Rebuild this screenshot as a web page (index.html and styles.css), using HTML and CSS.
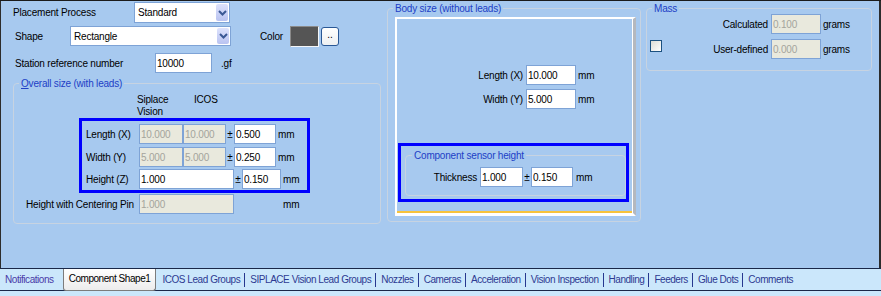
FILE: index.html
```html
<!DOCTYPE html>
<html lang="en">
<head>
    <meta charset="UTF-8">
    <title>Component Shape</title>
    <link rel="stylesheet" href="styles.css">
</head>
<body>

<div class="window">
    <div class="main">

        <!-- left column: process, shape, overall size -->
        <div class="col-left">
            <div class="row r1">
                <span class="lbl" style="width:121px">Placement Process</span>
                <div class="select w96">
                    <span class="sel-text">Standard</span>
                    <span class="sel-btn"><svg width="9" height="6" viewBox="0 0 9 6"><path d="M1 1 L4.5 4.5 L8 1" fill="none" stroke="#3a5894" stroke-width="2"/></svg></span>
                </div>
            </div>

            <div class="row r2">
                <span class="lbl" style="width:55px">Shape</span>
                <div class="select w161">
                    <span class="sel-text">Rectangle</span>
                    <span class="sel-btn"><svg width="9" height="6" viewBox="0 0 9 6"><path d="M1 1 L4.5 4.5 L8 1" fill="none" stroke="#3a5894" stroke-width="2"/></svg></span>
                </div>
                <span class="lbl color-lbl">Color</span>
                <span class="swatch"></span>
                <button class="dots" type="button">..</button>
            </div>

            <div class="row r3">
                <span class="lbl" style="width:140px">Station reference number</span>
                <input class="field" style="width:57px" type="text" value="10000">
                <span class="unit gf">.gf</span>
            </div>

            <fieldset class="group overall">
                <legend><u>O</u>verall size (with leads)</legend>
                <div class="head">
                    <span class="head-sv">Siplace<br>Vision</span>
                    <span>ICOS</span>
                </div>
                <div class="hbox">
                    <div class="row">
                        <span class="lbl dim-lbl">Length (X)</span>
                        <input class="field off" style="width:44px" type="text" value="10.000" disabled>
                        <input class="field off gap7" style="width:43px" type="text" value="10.000" disabled>
                        <span class="pm">±</span>
                        <input class="field" style="width:42px" type="text" value="0.500">
                        <span class="unit">mm</span>
                    </div>
                    <div class="row mt3">
                        <span class="lbl dim-lbl">Width (Y)</span>
                        <input class="field off" style="width:44px" type="text" value="5.000" disabled>
                        <input class="field off gap7" style="width:43px" type="text" value="5.000" disabled>
                        <span class="pm">±</span>
                        <input class="field" style="width:42px" type="text" value="0.250">
                        <span class="unit">mm</span>
                    </div>
                    <div class="row mt2">
                        <span class="lbl dim-lbl">Height (Z)</span>
                        <input class="field" style="width:95px" type="text" value="1.000">
                        <span class="pm">±</span>
                        <input class="field" style="width:39px" type="text" value="0.150">
                        <span class="unit">mm</span>
                    </div>
                </div>
                <div class="row pinrow">
                    <span class="lbl" style="width:113px">Height with Centering Pin</span>
                    <input class="field off" style="width:95px" type="text" value="1.000" disabled>
                    <span class="unit pin-unit">mm</span>
                </div>
            </fieldset>
        </div>

        <!-- body size -->
        <fieldset class="group body-size">
            <legend>Body size (without leads)</legend>
            <div class="panel">
                <div class="row body-len">
                    <span class="lbl rlbl" style="width:129px">Length (X)</span>
                    <input class="field" style="width:50px" type="text" value="10.000">
                    <span class="unit">mm</span>
                </div>
                <div class="row body-wid">
                    <span class="lbl rlbl" style="width:129px">Width (Y)</span>
                    <input class="field" style="width:50px" type="text" value="5.000">
                    <span class="unit">mm</span>
                </div>
                <div class="hbox sensor-box">
                    <fieldset class="group sensor">
                        <legend>Component sensor height</legend>
                        <div class="row sensor-row">
                            <span class="lbl rlbl" style="width:74px">Thickness</span>
                            <input class="field" style="width:43px" type="text" value="1.000">
                            <span class="pm">±</span>
                            <input class="field" style="width:42px" type="text" value="0.150">
                            <span class="unit">mm</span>
                        </div>
                    </fieldset>
                </div>
            </div>
        </fieldset>

        <!-- mass -->
        <fieldset class="group mass">
            <legend>Mass</legend>
            <div class="row mass-calc">
                <span class="lbl rlbl" style="width:124px">Calculated</span>
                <input class="field off" style="width:50px" type="text" value="0.100" disabled>
                <span class="unit">grams</span>
            </div>
            <div class="row mass-user">
                <span class="check"></span>
                <span class="lbl rlbl" style="width:109px">User-defined</span>
                <input class="field off" style="width:50px" type="text" value="0.000" disabled>
                <span class="unit">grams</span>
            </div>
        </fieldset>

    </div>

    <div class="tabs">
        <span class="tab first">Notifications</span>
        <span class="tab active">Component Shape1</span>
        <span class="tab">ICOS Lead Groups</span>
        <span class="tab">SIPLACE Vision Lead Groups</span>
        <span class="tab">Nozzles</span>
        <span class="tab">Cameras</span>
        <span class="tab">Acceleration</span>
        <span class="tab">Vision Inspection</span>
        <span class="tab">Handling</span>
        <span class="tab">Feeders</span>
        <span class="tab">Glue Dots</span>
        <span class="tab last">Comments</span>
    </div>
</div>

</body>
</html>
```

FILE: styles.css
```css
body {
    margin: 0;
    font-family: "Liberation Sans", Arial, sans-serif;
    font-size: 10px;
    letter-spacing: -0.2px;
    color: #000;
    background-color: #cbe7fb;
}

.window {
    width: 881px;
    height: 296px;
    box-sizing: border-box;
    border-top: 1px solid #1b1b1b;
    overflow: hidden;
}

.main {
    height: 267px;
    box-sizing: border-box;
    display: flex;
    align-items: flex-start;
    background-color: #a7c9ef;
    border-left: 1px solid #2c2c2c;
    border-right: 2px solid #2c2c2c;
}

/* generic rows and labels */
.row {
    display: flex;
    align-items: center;
    height: 20px;
}

.lbl {
    display: block;
    flex: none;
    box-sizing: border-box;
    white-space: nowrap;
}

.rlbl {
    text-align: right;
    padding-right: 3px;
}

.unit {
    margin-left: 2px;
    white-space: nowrap;
}

.pm {
    width: 8px;
    text-align: center;
    flex: none;
}

.mt3 { margin-top: 3px; }
.mt2 { margin-top: 2px; }
.gap7 { margin-left: 7px; }

.field {
    box-sizing: border-box;
    height: 20px;
    margin: 0;
    padding: 0 1px;
    border: 1px solid #7ea3d6;
    background-color: #fff;
    font-family: inherit;
    font-size: 10px;
    letter-spacing: inherit;
    color: #000;
    flex: none;
    outline: none;
}

.field.off {
    background-color: #e9e9dd;
    color: #a4a49c;
    -webkit-text-fill-color: #a4a49c;
    opacity: 1;
}

/* left column */
.col-left {
    width: 385px;
    flex: none;
}

.r1 {
    margin-top: 1px;
    height: 21px;
    padding-left: 12px;
}

.r2 {
    margin-top: 3px;
    padding-left: 14px;
}

.r3 {
    margin-top: 7px;
    padding-left: 14px;
}

.select {
    box-sizing: border-box;
    height: 100%;
    display: flex;
    align-items: stretch;
    border: 1px solid #7ea3d6;
    background-color: #fff;
    padding: 1px;
}

.w96 { width: 96px; }
.w161 { width: 161px; }

.sel-text {
    flex: 1;
    padding-left: 2px;
    display: flex;
    align-items: center;
}

.sel-btn {
    width: 12px;
    border-radius: 2px;
    background: linear-gradient(#dde2fc, #b9c3f1);
    display: flex;
    align-items: center;
    justify-content: center;
}

.color-lbl {
    margin-left: 29px;
    width: 30px;
}

.swatch {
    width: 29px;
    height: 21px;
    box-sizing: border-box;
    background-color: #555;
    border: 1px solid;
    border-color: #8a8a8a #f4f6f8 #f4f6f8 #8a8a8a;
}

.dots {
    margin-left: 2px;
    width: 18px;
    height: 19px;
    padding: 0 0 3px;
    border: 1px solid #2a5896;
    border-radius: 3px;
    background: linear-gradient(#fff, #eef0f2);
    font-family: inherit;
    font-size: 10px;
    line-height: 10px;
}

.gf {
    margin-left: 9px;
}

/* group boxes */
.group {
    margin: 0;
    padding: 0;
    min-width: 0;
    box-sizing: border-box;
    border: 1px solid #c7d3e1;
    border-radius: 4px;
}

.group legend {
    padding: 0 2px;
    margin-left: 5px;
    line-height: 13px;
    color: #2140c6;
}

.overall {
    margin: 4px 0 0 12px;
    width: 368px;
    height: 147px;
}

.head {
    margin-top: 4px;
    height: 24px;
    padding-left: 123px;
    display: flex;
    line-height: 12px;
}

.head-sv {
    width: 57px;
}

.hbox {
    box-sizing: border-box;
    width: 231px;
    height: 75px;
    margin-left: 65px;
    padding-top: 3px;
    border: 3px solid #0000ff;
}

.dim-lbl {
    width: 57px;
    padding-left: 4px;
}

.pinrow {
    margin-top: 1px;
    padding-left: 12px;
}

.pin-unit {
    margin-left: 49px;
}

/* body size */
.body-size {
    margin: 1px 0 0 1px;
    width: 254px;
    height: 220px;
    flex: none;
}

.panel {
    box-sizing: border-box;
    width: 241px;
    height: 199px;
    margin: 2px 0 0 7px;
    border-left: 2px solid #fff;
    border-top: 2px solid #fff;
    border-right: 3px solid #b4b8bf;
    border-bottom: 3px solid #fff;
    box-shadow: inset -1px 0 #fff, inset 0 -2px #f7c33c;
}

.body-len {
    margin-top: 46px;
}

.body-wid {
    margin-top: 4px;
}

.sensor-box {
    margin: 34px 0 0 1px;
    height: 59px;
    padding-top: 0;
}

.sensor {
    margin: 3px 0 0 4px;
    width: 221px;
    height: 47px;
}

.sensor legend {
    margin-left: 6px;
}

.sensor-row {
    margin-top: 5px;
}

.sensor-row .unit {
    margin-left: 3px;
}

/* mass */
.mass {
    margin: 1px 0 0 5px;
    width: 226px;
    height: 69px;
    flex: none;
}

.mass-calc {
    margin-top: -1px;
}

.mass-user {
    margin-top: 5px;
}

.check {
    flex: none;
    align-self: flex-start;
    margin: 1px 0 0 3px;
    width: 12px;
    height: 12px;
    box-sizing: border-box;
    border: 1px solid #1c5180;
    background: linear-gradient(135deg, #dcdcd6, #fff);
}

/* tab strip */
.tabs {
    height: 23px;
    box-sizing: border-box;
    display: flex;
    align-items: center;
    padding-left: 4px;
    border-top: 1px solid #1a2748;
    border-bottom: 1px solid #1a2748;
    background-color: #cbe7fb;
    letter-spacing: -0.45px;
}

.tab {
    line-height: 14px;
    padding: 0 4px 0 5px;
    border-right: 1px solid #27388f;
    color: #2d3a92;
    white-space: nowrap;
}

.tab.first {
    padding-left: 1px;
    padding-right: 9px;
    border-right: none;
    color: #4a3aa8;
}

.tab.active {
    align-self: flex-start;
    height: 22px;
    line-height: 20px;
    box-sizing: border-box;
    padding: 0 5px;
    margin-right: 1px;
    border: 1px solid #7c7c7c;
    border-top: none;
    border-radius: 0 0 3px 3px;
    background: linear-gradient(#ffffff, #ececec);
    color: #000;
}

.tab.last {
    border-right: none;
}
```
